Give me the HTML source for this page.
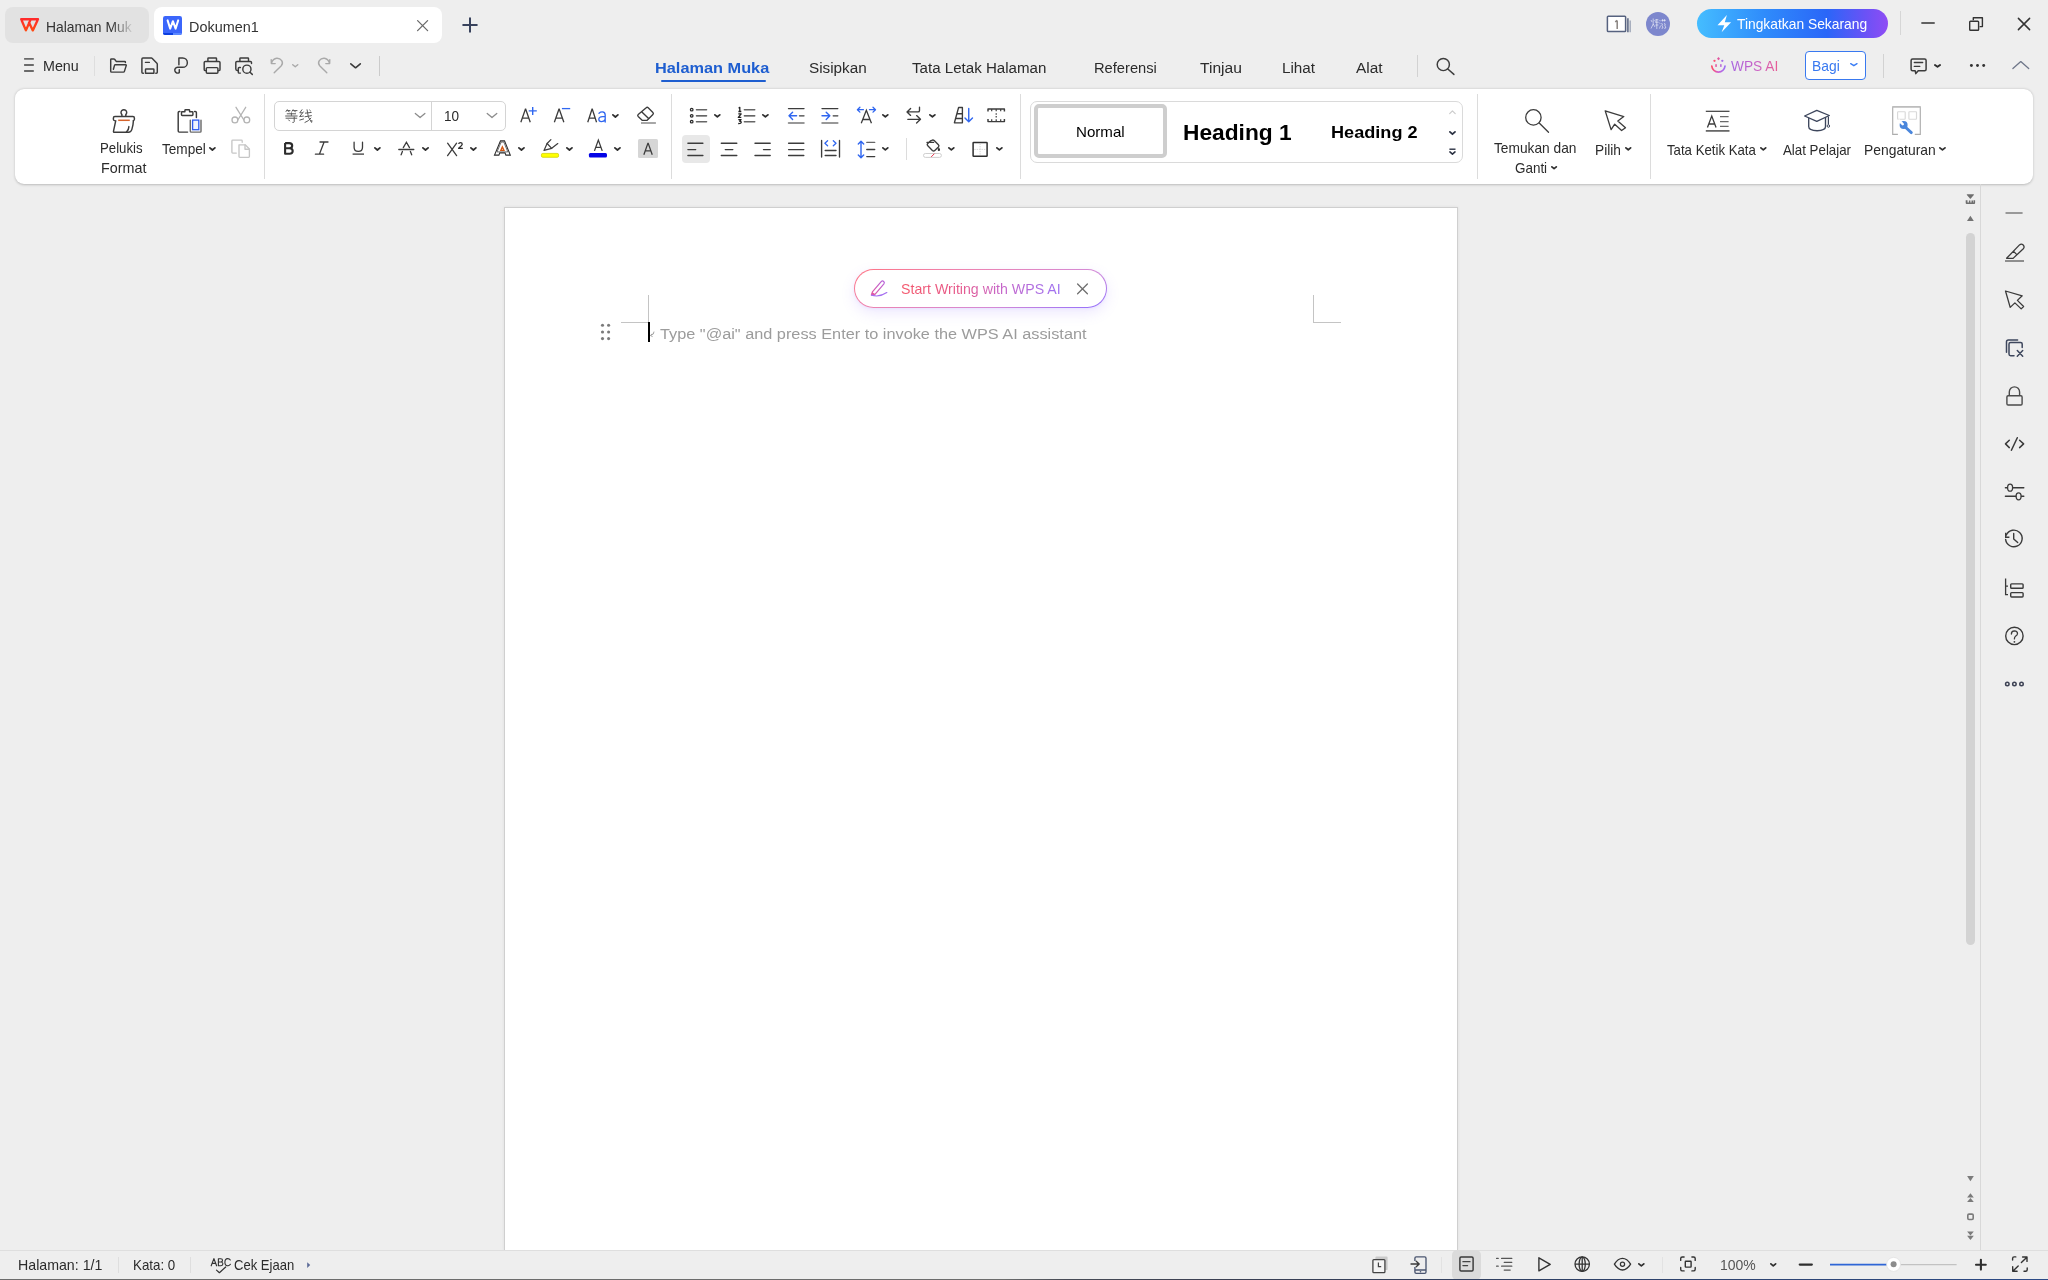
<!DOCTYPE html>
<html><head><meta charset="utf-8"><title>Dokumen1</title>
<style>
html,body{margin:0;padding:0;}
body{width:2048px;height:1280px;overflow:hidden;background:#eeeeee;position:relative;font-family:"Liberation Sans",sans-serif;}
.a{position:absolute;display:block;}
.t{position:absolute;white-space:nowrap;line-height:1;transform-origin:0 0;font-family:"Liberation Sans",sans-serif;}
</style></head><body>
<div class="a" style="left:5px;top:7px;width:144px;height:36px;background:#e2e2e2;border-radius:8px;"></div>
<div class="a" style="left:154px;top:7px;width:287.5px;height:36px;background:#ffffff;border-radius:8px;"></div>
<div class="t" style="left:46.27px;top:18.50px;font-size:15px;color:#333;transform:scaleX(0.9257);-webkit-mask-image:linear-gradient(90deg,#000 76%,transparent 103%);mask-image:linear-gradient(90deg,#000 76%,transparent 103%);">Halaman Muk</div>
<div class="t" style="left:189.44px;top:18.50px;font-size:15px;color:#333;transform:scaleX(0.9607);">Dokumen1</div>
<div class="a" style="left:1697px;top:9.3px;width:191px;height:29.1px;background:linear-gradient(90deg,#45bdff 0%,#2f8cfb 35%,#2a66f8 68%,#6a52f6 88%,#8f4cf4 100%);border-radius:14.5px;"></div>
<div class="t" style="left:1737.40px;top:17.43px;font-size:14.5px;color:#fff;transform:scaleX(0.9529);">Tingkatkan Sekarang</div>
<div class="a" style="left:1900px;top:11px;width:1px;height:24px;background:#d6d6d6;border-radius:0px;"></div>
<div class="a" style="left:1646px;top:12px;width:24.4px;height:24.4px;background:#7d87cd;border-radius:12.2px;"></div>
<div class="t" style="left:43.01px;top:59.03px;font-size:14.5px;color:#2b2b2b;transform:scaleX(0.9856);">Menu</div>
<div class="a" style="left:93.6px;top:56.3px;width:1px;height:19.4px;background:#dedede;border-radius:0px;"></div>
<div class="a" style="left:379px;top:56.3px;width:1px;height:19.4px;background:#cbcbcb;border-radius:0px;"></div>
<div class="t" style="left:655.33px;top:59.95px;font-size:15.3px;color:#1e5ed0;font-weight:700;transform:scaleX(1.0665);">Halaman Muka</div>
<div class="a" style="left:661px;top:79.6px;width:105.2px;height:2.8px;background:#1e5ed0;border-radius:1.4px;"></div>
<div class="t" style="left:808.80px;top:59.86px;font-size:15.4px;color:#2b2b2b;transform:scaleX(0.9928);">Sisipkan</div>
<div class="t" style="left:912.30px;top:59.86px;font-size:15.4px;color:#2b2b2b;transform:scaleX(0.9815);">Tata Letak Halaman</div>
<div class="t" style="left:1093.95px;top:59.86px;font-size:15.4px;color:#2b2b2b;transform:scaleX(0.9542);">Referensi</div>
<div class="t" style="left:1200.00px;top:59.86px;font-size:15.4px;color:#2b2b2b;transform:scaleX(1.0150);">Tinjau</div>
<div class="t" style="left:1282.01px;top:59.86px;font-size:15.4px;color:#2b2b2b;transform:scaleX(0.9910);">Lihat</div>
<div class="t" style="left:1356.30px;top:59.86px;font-size:15.4px;color:#2b2b2b;transform:scaleX(1.0020);">Alat</div>
<div class="a" style="left:1417.3px;top:54.7px;width:1px;height:22.4px;background:#d2d2d2;border-radius:0px;"></div>
<div class="t" style="left:1731.30px;top:58.40px;font-size:15px;color:#b05fd6;transform:scaleX(0.9155);background:linear-gradient(90deg,#a765e0 0%,#c95fc4 55%,#ea5c92 100%);-webkit-background-clip:text;background-clip:text;color:transparent;">WPS AI</div>
<div class="a" style="left:1805px;top:51px;width:59px;height:27px;border:1px solid #3979f0;border-radius:4px;background:#fff"></div>
<div class="t" style="left:1811.68px;top:58.40px;font-size:15px;color:#3979f0;transform:scaleX(0.9237);">Bagi</div>
<div class="a" style="left:1883.3px;top:53.6px;width:1px;height:24px;background:#d2d2d2;border-radius:0px;"></div>
<div class="a" style="left:15px;top:88.5px;width:2018px;height:95px;background:#fff;border-radius:9px;box-shadow:0 0.5px 2.5px rgba(0,0,0,.22)"></div>
<div class="a" style="left:264.3px;top:94px;width:1px;height:85px;background:#dcdcdc;border-radius:0px;"></div>
<div class="a" style="left:671.2px;top:94px;width:1px;height:85px;background:#dcdcdc;border-radius:0px;"></div>
<div class="a" style="left:1020.4px;top:94px;width:1px;height:85px;background:#dcdcdc;border-radius:0px;"></div>
<div class="a" style="left:1477px;top:94px;width:1px;height:85px;background:#dcdcdc;border-radius:0px;"></div>
<div class="a" style="left:1650px;top:94px;width:1px;height:85px;background:#dcdcdc;border-radius:0px;"></div>
<div class="t" style="left:100.29px;top:140.53px;font-size:14.5px;color:#2b2b2b;transform:scaleX(0.9100);">Pelukis</div>
<div class="t" style="left:101.11px;top:160.63px;font-size:14.5px;color:#2b2b2b;transform:scaleX(0.9890);">Format</div>
<div class="t" style="left:161.50px;top:141.63px;font-size:14.5px;color:#2b2b2b;transform:scaleX(0.9372);">Tempel</div>
<div class="a" style="left:274px;top:101px;width:229.6px;height:27.5px;border:1px solid #d4d4d4;border-radius:5px;background:#fff"></div>
<div class="a" style="left:431px;top:101.5px;width:1px;height:28px;background:#d4d4d4;border-radius:0px;"></div>
<div class="t" style="left:443.56px;top:109.23px;font-size:14.5px;color:#2b2b2b;transform:scaleX(0.9360);">10</div>
<div class="a" style="left:681.8px;top:134.5px;width:28.4px;height:28.2px;background:#e8e8e8;border-radius:4px;"></div>
<div class="a" style="left:638.3px;top:139px;width:19.5px;height:19.2px;background:#d6d6d6;border-radius:1.5px;"></div>
<div class="a" style="left:906.2px;top:137.7px;width:1px;height:22px;background:#dcdcdc;border-radius:0px;"></div>
<div class="a" style="left:1030px;top:101px;width:431px;height:60px;border:1px solid #dadada;border-radius:7px;background:#fff"></div>
<div class="a" style="left:1034px;top:104.1px;width:125px;height:46px;border:4.5px solid #cecece;border-radius:5px;background:#fff"></div>
<div class="t" style="left:1076.36px;top:124.93px;font-size:14.5px;color:#000;transform:scaleX(1.0416);">Normal</div>
<div class="t" style="left:1182.75px;top:122.12px;font-size:21.6px;color:#000;font-weight:700;transform:scaleX(1.0530);">Heading 1</div>
<div class="t" style="left:1331.13px;top:123.91px;font-size:17px;color:#000;font-weight:700;transform:scaleX(1.0654);">Heading 2</div>
<div class="t" style="left:1493.60px;top:141.03px;font-size:14.5px;color:#2b2b2b;transform:scaleX(0.9472);">Temukan dan</div>
<div class="t" style="left:1514.80px;top:160.63px;font-size:14.5px;color:#2b2b2b;transform:scaleX(0.9264);">Ganti</div>
<div class="t" style="left:1595.35px;top:142.63px;font-size:14.5px;color:#2b2b2b;transform:scaleX(0.9455);">Pilih</div>
<div class="t" style="left:1666.70px;top:142.63px;font-size:14.5px;color:#2b2b2b;transform:scaleX(0.9110);">Tata Ketik Kata</div>
<div class="t" style="left:1782.70px;top:142.63px;font-size:14.5px;color:#2b2b2b;transform:scaleX(0.9176);">Alat Pelajar</div>
<div class="t" style="left:1864.14px;top:142.63px;font-size:14.5px;color:#2b2b2b;transform:scaleX(0.9565);">Pengaturan</div>
<div class="a" style="left:504px;top:207px;width:952px;height:1043px;background:#fff;border:1px solid #cfcfcf;border-bottom:none;box-shadow:0 0 3px rgba(0,0,0,.07)"></div>
<div class="a" style="left:1980px;top:184px;width:1px;height:1066px;background:#d8d8d8;border-radius:0px;"></div>
<div class="a" style="left:1965.8px;top:232.6px;width:9.3px;height:712.6px;background:#d3d3d3;border-radius:4.65px;"></div>
<div class="a" style="left:0px;top:1249.9px;width:2048px;height:1px;background:#dedede;border-radius:0px;"></div>
<div class="a" style="left:0px;top:1250.5px;width:2048px;height:29.5px;background:#eeeeee;border-radius:0px;"></div>
<div class="t" style="left:18.48px;top:1258.63px;font-size:13.9px;color:#2b2b2b;transform:scaleX(1.0208);">Halaman: 1/1</div>
<div class="a" style="left:118px;top:1256.7px;width:1px;height:16.4px;background:#dedede;border-radius:0px;"></div>
<div class="t" style="left:133.34px;top:1258.63px;font-size:13.9px;color:#2b2b2b;transform:scaleX(0.9586);">Kata: 0</div>
<div class="a" style="left:190px;top:1256.7px;width:1px;height:16.4px;background:#dedede;border-radius:0px;"></div>
<div class="t" style="left:233.90px;top:1258.93px;font-size:13.9px;color:#2b2b2b;transform:scaleX(0.9390);">Cek Ejaan</div>
<div class="t" style="left:1719.89px;top:1258.53px;font-size:13.9px;color:#555;transform:scaleX(1.0066);">100%</div>
<svg class="a" style="left:18px;top:16px;" width="24" height="18" viewBox="0 0 24 18" fill="none"><defs><linearGradient id="wg" x1="0" y1="0" x2="0" y2="1"><stop offset="0" stop-color="#ff2b2b"/><stop offset="1" stop-color="#ff4a14"/></linearGradient></defs><path d="M3.2 3.2 H20 M3.2 3.3 L7.9 14.4 L12.7 3.4 M11 6.6 L14.8 14.4 L20 3.3" stroke="url(#wg)" stroke-width="2.35" stroke-linejoin="round" stroke-linecap="round"/></svg>
<div class="a" style="left:163px;top:15.8px;width:19.2px;height:19.4px;background:#3b66fb;border-radius:2.2px;"></div>
<div class="a" style="left:163px;top:32.9px;width:19.2px;height:2.3px;border-radius:0 0 2.2px 2.2px;background:linear-gradient(90deg,#0c3fe0 0 52%,#5a88ff 52%)"></div>
<svg class="a" style="left:166px;top:19px;" width="14" height="12" viewBox="0 0 14 12" fill="none"><path d="M1.6 1.4 L4.2 9.6 L6.9 2.2 L9.6 9.6 L12.2 1.4" stroke="#fff" stroke-width="2" stroke-linejoin="round" stroke-linecap="round"/></svg>
<svg class="a" style="left:415px;top:18px;" width="15" height="15" viewBox="0 0 15 15" fill="none"><path d="M2.6 2.6 L12.6 12.6 M12.6 2.6 L2.6 12.6" stroke="#6a6a6a" stroke-width="1.3" stroke-linecap="round"/></svg>
<svg class="a" style="left:461px;top:16px;" width="18" height="18" viewBox="0 0 18 18" fill="none"><path d="M9 2.2 V15.8 M2.2 9 H15.8" stroke="#38425c" stroke-width="2" stroke-linecap="round"/></svg>
<svg class="a" style="left:1605px;top:14px;" width="28" height="20" viewBox="0 0 28 20" fill="none"><rect x="2.4" y="2.3" width="18.2" height="15.3" rx="0.8" fill="#fff" stroke="#56627f" stroke-width="1.5"/><path d="M12.2 6.4 V14.9 M12.2 6.4 L10.2 7.9" stroke="#8a8480" stroke-width="1.5" stroke-linecap="butt"/><path d="M22.9 4.2 V18.2" stroke="#56627f" stroke-width="1.5"/><path d="M25.2 6.6 V18.2" stroke="#a4abbb" stroke-width="1.5"/></svg>
<svg class="a" style="left:1650px;top:17px;" width="17" height="14" viewBox="0 0 17 14" fill="none"><g stroke="#fff" stroke-opacity=".62" stroke-width="0.9" fill="none"><path d="M1 3 L2 5 M3.2 1.5 V7 L1 11.5 M3.2 7 L5 10 M4.6 3 L5.4 4.6 M5 5.2 H8.6 M5.4 8 H8.4 M6.8 2 V12 M5.2 2.8 H8.4"/><path d="M9.6 3 L10.4 4.2 M9.4 5.6 L10.2 6.8 M9.4 11.6 L10.6 8.6 M11.4 3.4 H15.8 M12.6 2 V4.6 M14.6 2 V4.6 M11.6 6 L12.6 8.2 L11.4 8.4 M12.4 9 L13 11 L11.6 11.4 M14.4 6 L15.4 8.2 L14.2 8.4 M15.2 9 L15.8 11 L14.2 11.4"/></g></svg>
<svg class="a" style="left:1716px;top:14px;" width="17" height="20" viewBox="0 0 17 20" fill="none"><path d="M10.9 1 L1.5 11.2 H8.3 L5.6 18.3 L15.1 8.3 H8.8 Z" fill="#fff"/></svg>
<svg class="a" style="left:1920px;top:20px;" width="17" height="6" viewBox="0 0 17 6" fill="none"><path d="M1.9 3.1 H14.2" stroke="#333" stroke-width="1.5" stroke-linecap="round"/></svg>
<svg class="a" style="left:1967px;top:15px;" width="18" height="18" viewBox="0 0 18 18" fill="none"><path d="M6.3 5.2 V2.8 H15.4 V11.6 H12.6" stroke="#333" stroke-width="1.4" stroke-linejoin="round"/><rect x="2.7" y="6.3" width="8.9" height="8.9" rx="0.8" stroke="#333" stroke-width="1.4"/></svg>
<svg class="a" style="left:2016px;top:16px;" width="16" height="16" viewBox="0 0 16 16" fill="none"><path d="M2.4 2.4 L13.6 13.6 M13.6 2.4 L2.4 13.6" stroke="#333" stroke-width="1.5" stroke-linecap="round"/></svg>
<svg class="a" style="left:22px;top:56px;" width="14" height="18" viewBox="0 0 14 18" fill="none"><path d="M2.1 2.9 H11.8 M2.1 9 H11.8 M2.1 15 H11.8" stroke="#6a6a6a" stroke-width="1.8"/></svg>
<svg class="a" style="left:108px;top:56px;" width="21" height="19" viewBox="0 0 21 19" fill="none"><path d="M17.4 6.4 V6 Q17.4 5.4 16.8 5.4 H8.2 L6.6 3.2 Q6.4 3 6 3 H3.4 Q2.7 3 2.7 3.7 V15.2 Q2.7 16.1 3.6 16.1 H15.4 Q16.2 16.1 16.4 15.4 L18.3 9.4 Q18.5 8.7 17.7 8.7 H7.4 Q6.7 8.7 6.5 9.4 L5.4 13.2" stroke="#3c3c3c" stroke-width="1.45" stroke-linejoin="round" stroke-linecap="round"/></svg>
<svg class="a" style="left:139px;top:55px;" width="21" height="21" viewBox="0 0 21 21" fill="none"><path d="M4.4 18.2 H3.9 Q2.9 18.2 2.9 17.2 V4 Q2.9 3 3.9 3 H12.4 Q12.9 3 13.3 3.4 L17.9 8.2 Q18.3 8.6 18.3 9.1 V17.2 Q18.3 18.2 17.3 18.2 H16.8" stroke="#3c3c3c" stroke-width="1.45" stroke-linecap="round"/><path d="M6.5 18.3 V14.6 Q6.5 14 7.1 14 H14.3 Q14.9 14 14.9 14.6 V18.3 Z" stroke="#3c3c3c" stroke-width="1.45" stroke-linejoin="round"/><path d="M6.4 7.4 H10.4" stroke="#3c3c3c" stroke-width="1.3" stroke-linecap="round"/></svg>
<svg class="a" style="left:171px;top:55px;" width="20" height="21" viewBox="0 0 20 21" fill="none"><path d="M7.9 9.8 V3 H11.7 A4.65 4.65 0 0 1 11.7 12.3 H6.6 A2.9 2.9 0 1 0 8.3 17.6 V14.6" stroke="#3c3c3c" stroke-width="1.45" stroke-linecap="round" stroke-linejoin="round"/></svg>
<svg class="a" style="left:201px;top:55px;" width="22" height="21" viewBox="0 0 22 21" fill="none"><path d="M6.9 6.3 V3.6 Q6.9 2.9 7.6 2.9 H14.8 Q15.5 2.9 15.5 3.6 V6.3" stroke="#3c3c3c" stroke-width="1.45"/><path d="M5.2 15.6 H4.4 Q3.2 15.6 3.2 14.4 V7.6 Q3.2 6.4 4.4 6.4 H17.8 Q19 6.4 19 7.6 V14.4 Q19 15.6 17.8 15.6 H17" stroke="#3c3c3c" stroke-width="1.45"/><rect x="5.3" y="12.6" width="11.6" height="5.6" rx="1" stroke="#3c3c3c" stroke-width="1.45"/></svg>
<svg class="a" style="left:233px;top:55px;" width="22" height="22" viewBox="0 0 22 22" fill="none"><path d="M6.9 6.3 V3.6 Q6.9 2.9 7.6 2.9 H14.8 Q15.5 2.9 15.5 3.6 V6.3" stroke="#3c3c3c" stroke-width="1.45"/><path d="M4.6 15.4 H4.2 Q2.8 15.4 2.8 14 V7.6 Q2.8 6.4 4 6.4 H17.4 Q18.5 6.4 18.5 7.5 V8.4" stroke="#3c3c3c" stroke-width="1.45" stroke-linecap="round"/><path d="M7.4 12.5 H6.2 Q5.3 12.5 5.3 13.4 V17.2 Q5.3 18.1 6.2 18.1 H7.4" stroke="#3c3c3c" stroke-width="1.45" stroke-linecap="round"/><circle cx="13.9" cy="14.2" r="4.1" stroke="#3c3c3c" stroke-width="1.45"/><path d="M17 17.3 L19.3 19.4" stroke="#3c3c3c" stroke-width="1.45" stroke-linecap="round"/></svg>
<svg class="a" style="left:268px;top:56px;" width="17" height="19" viewBox="0 0 17 19" fill="none"><path d="M6.2 16.8 L13.3 9.7 Q15.4 7.4 13.7 4.6 Q11.9 2.1 8.7 2.3 Q5 2.7 3.5 6.9" stroke="#a9a9a9" stroke-width="1.4" stroke-linecap="round"/><path d="M3.2 3.6 L3.4 7.5 L7.2 7.6" stroke="#a9a9a9" stroke-width="1.4" stroke-linecap="round" stroke-linejoin="round"/></svg>
<svg class="a" style="left:290.4px;top:62.099999999999994px;" width="10.5" height="7.5" viewBox="0 0 10.5 7.5" fill="none"><path d="M2.75 2.75 L5.25 4.75 L7.75 2.75" stroke="#a9a9a9" stroke-width="1.5" stroke-linecap="round" stroke-linejoin="round"/></svg>
<svg class="a" style="left:316px;top:56px;" width="17" height="19" viewBox="0 0 17 19" fill="none"><g transform="translate(17,0) scale(-1,1)"><path d="M6.2 16.8 L13.3 9.7 Q15.4 7.4 13.7 4.6 Q11.9 2.1 8.7 2.3 Q5 2.7 3.5 6.9" stroke="#a9a9a9" stroke-width="1.4" stroke-linecap="round"/><path d="M3.2 3.6 L3.4 7.5 L7.2 7.6" stroke="#a9a9a9" stroke-width="1.4" stroke-linecap="round" stroke-linejoin="round"/></g></svg>
<svg class="a" style="left:347.7px;top:61.3px;" width="15.100000000000023" height="9.600000000000009" viewBox="0 0 15.100000000000023 9.600000000000009" fill="none"><path d="M2.80 2.80 L7.55 6.80 L12.30 2.80" stroke="#3a3a3a" stroke-width="1.6" stroke-linecap="round" stroke-linejoin="round"/></svg>
<svg class="a" style="left:1434px;top:55px;" width="23" height="22" viewBox="0 0 23 22" fill="none"><circle cx="9.3" cy="9.5" r="6.1" stroke="#3c3c3c" stroke-width="1.45"/><path d="M13.8 14 L19.9 19.4" stroke="#3c3c3c" stroke-width="1.45" stroke-linecap="round"/></svg>
<svg class="a" style="left:1709px;top:56px;" width="19" height="19" viewBox="0 0 19 19" fill="none"><defs><linearGradient id="ai" x1="0" y1="0" x2="1" y2="0"><stop offset="0" stop-color="#ff4f66"/><stop offset=".5" stop-color="#cf5fd2"/><stop offset="1" stop-color="#9a72f4"/></linearGradient></defs><path d="M2.8 10.2 A6.65 6.65 0 0 0 16 10.2" stroke="url(#ai)" stroke-width="1.7" stroke-linecap="round"/><rect x="6.3" y="8.2" width="1.5" height="2.7" fill="#e0559f"/><rect x="11.1" y="8.2" width="1.5" height="2.7" fill="#b768d8"/><circle cx="5.5" cy="4.8" r="1.15" fill="#fb5272"/><path d="M9.5 1.1 L11 2.7 L9.5 4.3 L8 2.7 Z" fill="#e2569e"/><circle cx="13.3" cy="4.8" r="1.15" fill="#a66ee8"/></svg>
<svg class="a" style="left:1848px;top:61.4px;" width="11.700000000000045" height="7.399999999999999" viewBox="0 0 11.700000000000045 7.399999999999999" fill="none"><path d="M2.70 2.70 L5.85 4.70 L9.00 2.70" stroke="#3a7df5" stroke-width="1.4" stroke-linecap="round" stroke-linejoin="round"/></svg>
<svg class="a" style="left:1908px;top:56px;" width="21" height="20" viewBox="0 0 21 20" fill="none"><path d="M4.6 3 H16.6 Q18.1 3 18.1 4.5 V13.3 Q18.1 14.8 16.6 14.8 H10.2 L7.8 17.6 L7.2 14.8 H4.6 Q3.1 14.8 3.1 13.3 V4.5 Q3.1 3 4.6 3 Z" stroke="#3c3c3c" stroke-width="1.5" stroke-linejoin="round"/><path d="M6.3 6.5 H14.7 M6.3 10.4 H11.8" stroke="#3c3c3c" stroke-width="1.3" stroke-linecap="round"/></svg>
<svg class="a" style="left:1931.9px;top:62px;" width="11.0" height="7.799999999999997" viewBox="0 0 11.0 7.799999999999997" fill="none"><path d="M2.95 2.95 L5.50 4.85 L8.05 2.95" stroke="#2e2e2e" stroke-width="1.9" stroke-linecap="round" stroke-linejoin="round"/></svg>
<svg class="a" style="left:1968px;top:62px;" width="19" height="7" viewBox="0 0 19 7" fill="none"><circle cx="3.4" cy="3.5" r="1.45" fill="#333"/><circle cx="9.5" cy="3.5" r="1.45" fill="#333"/><circle cx="15.7" cy="3.5" r="1.45" fill="#333"/></svg>
<svg class="a" style="left:2010px;top:59px;" width="21" height="12" viewBox="0 0 21 12" fill="none"><path d="M2.9 9.6 L10.8 2.6 L18.7 9.6" stroke="#6e7689" stroke-width="1.3" stroke-linecap="round" stroke-linejoin="round"/></svg>
<svg class="a" style="left:0px;top:88px;" width="2048" height="96" viewBox="0 88 2048 96" fill="none"><g stroke="#3c3c3c" stroke-width="1.45" stroke-linecap="round" stroke-linejoin="round"><path d="M121.9 116.3 V114.6 A2.85 2.85 0 1 1 125.8 114.6 V116.3"/><path d="M114.4 120.6 Q113.4 120.4 113.4 119.3 V117.9 Q113.4 116.4 114.9 116.4 H132.9 Q134.4 116.4 134.4 117.9 V119.3 Q134.4 120.4 133.4 120.6"/><path d="M115.7 120.8 L113.5 131.2 Q113.3 132.2 114.3 132.2 H128.6 Q131 132.2 131.8 129.6 Q133.3 125 133.4 120.8"/><path d="M128.9 126.6 Q128.7 130.4 126.4 132.1"/></g><path d="M118.2 120.3 H129.8" stroke="#d5632b" stroke-width="1.5"/><g stroke="#3c3c3c" stroke-width="1.45" stroke-linecap="round" stroke-linejoin="round"><path d="M187.6 132.1 H179.3 Q178.2 132.1 178.2 131 V112.6 Q178.2 111.5 179.3 111.5 H179.9"/><path d="M194.6 111.5 H195.3 Q196.4 111.5 196.4 112.6 V117.4"/><path d="M184.9 111.7 V110.4 Q184.9 109.7 185.6 109.7 H188.9 Q189.6 109.7 189.6 110.4 V111.7 H192.2 Q192.9 111.7 192.9 112.4 V114.7 Q192.9 115.4 192.2 115.4 H182.2 Q181.5 115.4 181.5 114.7 V112.4 Q181.5 111.7 182.2 111.7 Z"/></g><path d="M190.3 120.2 V131.2 Q190.3 132.1 191.2 132.1 H200.1 Q201 132.1 201 131.2 V120.2" stroke="#6c6c6c" stroke-width="1.45" stroke-linecap="round"/><rect x="192.6" y="120.1" width="6.2" height="9.6" stroke="#2c59ef" stroke-width="1.3" fill="#eef2ff"/><g stroke="#b4b4b4" stroke-width="1.3" stroke-linecap="round"><circle cx="234.9" cy="119.9" r="2.9"/><circle cx="246.8" cy="119.9" r="2.9"/><path d="M236 107.3 L243.9 120 M245.7 107.3 L237.8 120"/></g><g stroke="#c6c6c6" stroke-width="1.35" stroke-linejoin="round" stroke-linecap="round"><path d="M236.3 153.1 H232.7 Q231.9 153.1 231.9 152.3 V140.9 Q231.9 140.1 232.7 140.1 H241.4 Q242.2 140.1 242.2 140.9 V142.2"/><path d="M239 144.8 H245.2 L249.4 149 V156.6 Q249.4 157.4 248.6 157.4 H239.8 Q239 157.4 239 156.6 Z"/><path d="M245 145 V149.2 H249.2"/></g><g stroke="#5a5a5a" stroke-width="1" stroke-linecap="butt" fill="none" transform="translate(284.8,109.2)"><path d="M2.6 0.2 L1 2.6 M2 1.4 H5.6 M3.6 1.6 L4.4 3 M8.4 0.2 L7 2.4 M7.8 1.4 H12.6 M9.8 1.6 L10.6 3"/><path d="M2 4.6 H11.2 M6.6 3.2 V6.6 M0.4 6.8 H12.8 M0.8 9 H12.4 M9.4 7.4 V12.6 Q9.4 13.4 7.6 13.2 M3.6 10.4 L5 12"/><g transform="translate(14.2,0)"><path d="M3.2 0.2 L0.8 3.6 H3.8 M4.6 2.4 L0.6 7.4 L4.8 6.8 M0.4 11 L5 9.6"/><path d="M6 4 L12.6 3.2 M5.6 7.6 L12.8 6.4 M8 0.2 Q8.4 8.6 12.6 13.4 M12.2 8.6 Q9.6 12 5.6 13.4 M10.4 0.6 L11.8 2 M12.8 10.8 V13"/></g></g><path d="M415.3 113.5 L420.1 117.6 L424.9 113.5 M487.2 113.5 L492 117.6 L496.8 113.5" stroke="#8c8c8c" stroke-width="1.25" stroke-linecap="round" stroke-linejoin="round"/><path d="M520.85 122.20 L525.55 108.75 L530.25 122.20 M522.06 118.10 H529.04" stroke="#3c3c3c" stroke-width="1.3" stroke-linejoin="miter" stroke-miterlimit="3" fill="none"/><path d="M532.7 106.9 V114.9 M528.7 110.9 H536.8" stroke="#2f66f0" stroke-width="1.4"/><path d="M554.35 122.20 L559.10 108.75 L563.85 122.20 M555.57 118.10 H562.63" stroke="#3c3c3c" stroke-width="1.3" stroke-linejoin="miter" stroke-miterlimit="3" fill="none"/><path d="M561.9 108.6 H570.2" stroke="#2f66f0" stroke-width="1.3"/><path d="M587.75 122.20 L592.15 108.75 L596.55 122.20 M588.87 118.10 H595.43" stroke="#3c3c3c" stroke-width="1.3" stroke-linejoin="miter" stroke-miterlimit="3" fill="none"/><path d="M599 113.2 Q600.6 111.8 602.4 111.9 Q605.2 112.1 605.2 115 V122 M605.2 116.6 H602.6 Q598.8 116.7 598.8 119.3 Q598.8 121.6 601.4 121.6 Q604 121.6 605.2 119.4" stroke="#2f66f0" stroke-width="1.3" stroke-linecap="round" fill="none"/><g stroke="#3c3c3c" stroke-width="1.35" stroke-linejoin="round" stroke-linecap="round"><path d="M646.2 107.7 Q647.2 106.7 648.2 107.7 L652.9 112.4 Q653.9 113.4 652.9 114.4 L646.9 120.4 H642.4 L638.2 116.6 Q637.2 115.6 638.2 114.6 Z"/><path d="M641.9 111.9 L648.6 118.6"/></g><path d="M641 123 H655.9" stroke="#8a8a8a" stroke-width="1.5"/><path d="M285.1 143.1 H289.2 Q292.2 143.1 292.2 145.8 Q292.2 148.3 289.4 148.3 H285.1 M289.4 148.3 Q292.7 148.4 292.7 151.1 Q292.7 153.7 289.6 153.7 H285.1 V143.1" stroke="#2c2c2c" stroke-width="2.1" stroke-linejoin="round" fill="none"/><path d="M320 142 H328 M315.4 154.2 H323.6 M324.1 142 L319.4 154.2" stroke="#3c3c3c" stroke-width="1.3" stroke-linecap="round"/><path d="M354.1 142.2 V147.2 Q354.1 151.4 358.3 151.4 Q362.5 151.4 362.5 147.2 V142.2" stroke="#3c3c3c" stroke-width="1.3" stroke-linecap="round" fill="none"/><path d="M352.6 154.1 H364" stroke="#3c3c3c" stroke-width="1.3"/><path d="M403.3 147.6 L406.4 142.2 L409.5 147.6 M402.4 151.4 L401.1 154.8 M410.4 151.4 L411.7 154.8" stroke="#3c3c3c" stroke-width="1.3" stroke-linecap="round" stroke-linejoin="miter" fill="none"/><path d="M398.8 149.5 H413.8" stroke="#3c3c3c" stroke-width="1.3" stroke-linecap="round"/><path d="M447.6 143.2 L456.6 155.6 M456.6 143.2 L447.6 155.6" stroke="#3c3c3c" stroke-width="1.3" stroke-linecap="round"/><path d="M458.7 144 Q458.9 142.7 460.5 142.7 Q462.2 142.7 462.2 144.2 Q462.2 145.2 458.6 148.3 H462.8" stroke="#2e2e2e" stroke-width="1.3" stroke-linejoin="round" fill="none"/><path d="M494.5 155.1 L500.5 140.9 H504.5 L510.3 155.1 H505.9 L505 152.9 H499.8 L498.9 155.1 Z" stroke="#2c2c2c" stroke-width="1.1" stroke-linejoin="miter" fill="#fff"/><path d="M501.2 142 H503.8 L507.8 151.9 H497 Z" stroke="#4a4a4a" stroke-width="0.8" stroke-linejoin="miter" fill="#fff"/><path d="M502.35 145.3 L505 151 H499.8 Z" fill="#d4560f"/><circle cx="502.4" cy="149.3" r="0.55" fill="#ffe3d2"/><g stroke="#3c3c3c" stroke-width="1.2" stroke-linecap="round" stroke-linejoin="round" fill="none"><path d="M550.9 139.6 L547.1 143.5 L544 150.4 L551.7 148.3 L557.8 143.6"/><path d="M547.1 143.5 L551.7 148.3"/></g><rect x="541.4" y="153.4" width="17.2" height="3.9" rx="1.4" fill="#ffff00" stroke="#d2d200" stroke-width="0.8"/><path d="M594.45 150.90 L598.35 140.05 L602.25 150.90 M595.48 147.40 H601.22" stroke="#3c3c3c" stroke-width="1.3" stroke-linejoin="miter" stroke-miterlimit="3" fill="none"/><rect x="588.9" y="153" width="18.1" height="4.6" rx="1.5" fill="#0404e6"/><path d="M643.85 154.80 L648.05 142.85 L652.25 154.80 M645.04 150.80 H651.06" stroke="#3c3c3c" stroke-width="1.3" stroke-linejoin="miter" stroke-miterlimit="3" fill="none"/></svg>
<svg class="a" style="left:207px;top:144.5px;" width="10.800000000000011" height="7.900000000000006" viewBox="0 0 10.800000000000011 7.900000000000006" fill="none"><path d="M2.90 2.90 L5.40 5.00 L7.90 2.90" stroke="#2e2e2e" stroke-width="1.8" stroke-linecap="round" stroke-linejoin="round"/></svg>
<svg class="a" style="left:610.3px;top:111.7px;" width="10.800000000000068" height="7.8999999999999915" viewBox="0 0 10.800000000000068 7.8999999999999915" fill="none"><path d="M2.90 2.90 L5.40 5.00 L7.90 2.90" stroke="#2e2e2e" stroke-width="1.8" stroke-linecap="round" stroke-linejoin="round"/></svg>
<svg class="a" style="left:371.8px;top:145px;" width="10.800000000000011" height="7.900000000000006" viewBox="0 0 10.800000000000011 7.900000000000006" fill="none"><path d="M2.90 2.90 L5.40 5.00 L7.90 2.90" stroke="#2e2e2e" stroke-width="1.8" stroke-linecap="round" stroke-linejoin="round"/></svg>
<svg class="a" style="left:419.6px;top:145px;" width="11.0" height="7.900000000000006" viewBox="0 0 11.0 7.900000000000006" fill="none"><path d="M2.90 2.90 L5.50 5.00 L8.10 2.90" stroke="#2e2e2e" stroke-width="1.8" stroke-linecap="round" stroke-linejoin="round"/></svg>
<svg class="a" style="left:467.8px;top:145px;" width="10.800000000000011" height="7.900000000000006" viewBox="0 0 10.800000000000011 7.900000000000006" fill="none"><path d="M2.90 2.90 L5.40 5.00 L7.90 2.90" stroke="#2e2e2e" stroke-width="1.8" stroke-linecap="round" stroke-linejoin="round"/></svg>
<svg class="a" style="left:515.8px;top:145.2px;" width="10.900000000000091" height="7.900000000000006" viewBox="0 0 10.900000000000091 7.900000000000006" fill="none"><path d="M2.90 2.90 L5.45 5.00 L8.00 2.90" stroke="#2e2e2e" stroke-width="1.8" stroke-linecap="round" stroke-linejoin="round"/></svg>
<svg class="a" style="left:563.8px;top:145.2px;" width="10.900000000000091" height="7.900000000000006" viewBox="0 0 10.900000000000091 7.900000000000006" fill="none"><path d="M2.90 2.90 L5.45 5.00 L8.00 2.90" stroke="#2e2e2e" stroke-width="1.8" stroke-linecap="round" stroke-linejoin="round"/></svg>
<svg class="a" style="left:611.8px;top:145.2px;" width="10.900000000000091" height="7.900000000000006" viewBox="0 0 10.900000000000091 7.900000000000006" fill="none"><path d="M2.90 2.90 L5.45 5.00 L8.00 2.90" stroke="#2e2e2e" stroke-width="1.8" stroke-linecap="round" stroke-linejoin="round"/></svg>
<svg class="a" style="left:0px;top:88px;" width="2048" height="96" viewBox="0 88 2048 96" fill="none"><circle cx="691.7" cy="109.7" r="1.3" stroke="#2a2a2a" stroke-width="1.25" fill="none"/><path d="M696.4 109.7 H706.6" stroke="#666" stroke-width="1.35" stroke-linecap="round"/><circle cx="691.7" cy="115.8" r="1.3" stroke="#2a2a2a" stroke-width="1.25" fill="none"/><path d="M696.4 115.8 H706.6" stroke="#333" stroke-width="1.35" stroke-linecap="round"/><circle cx="691.7" cy="121.7" r="1.3" stroke="#2a2a2a" stroke-width="1.25" fill="none"/><path d="M696.4 121.7 H706.6" stroke="#666" stroke-width="1.35" stroke-linecap="round"/><path d="M744.3 109.7 H754.8" stroke="#666" stroke-width="1.35" stroke-linecap="round"/><path d="M744.3 115.8 H754.8" stroke="#333" stroke-width="1.35" stroke-linecap="round"/><path d="M744.3 121.7 H754.8" stroke="#666" stroke-width="1.35" stroke-linecap="round"/><g stroke="#222" stroke-width="1.3" fill="none" stroke-linejoin="round"><path d="M738.6 108.2 L739.8 107.4 V111.3 M738.4 111.5 H741.3"/><path d="M738.3 113.9 H741.2 L738.3 117.4 H741.3"/><path d="M738.3 119.6 H741.1 L739.6 121.2 Q741.3 121.3 741.2 122.6 Q741 123.7 738.2 123.5"/></g><path d="M788.5 108.6 H804" stroke="#3c3c3c" stroke-width="1.35" stroke-linecap="round"/><path d="M788.5 123 H804" stroke="#777" stroke-width="1.5" stroke-linecap="round"/><path d="M799.5 115.8 H804" stroke="#3c3c3c" stroke-width="1.35" stroke-linecap="round"/><path d="M796.6 115.8 H789.2 M792.6 112.2 L789 115.8 L792.6 119.4" stroke="#2f66f0" stroke-width="1.4" stroke-linecap="round" stroke-linejoin="round" fill="none"/><path d="M822 108.6 H837.8" stroke="#3c3c3c" stroke-width="1.35" stroke-linecap="round"/><path d="M822 123 H837.8" stroke="#777" stroke-width="1.5" stroke-linecap="round"/><path d="M833.2 115.8 H837.8" stroke="#3c3c3c" stroke-width="1.35" stroke-linecap="round"/><path d="M822 115.8 H829.6 M826.2 112.2 L829.8 115.8 L826.2 119.4" stroke="#2f66f0" stroke-width="1.4" stroke-linecap="round" stroke-linejoin="round" fill="none"/><path d="M861.25 123.30 L866.35 110.25 L871.45 123.30 M862.49 119.50 H870.21" stroke="#3c3c3c" stroke-width="1.3" stroke-linejoin="miter" stroke-miterlimit="3" fill="none"/><path d="M857.6 109.7 H863.4 M859.9 107.3 L857.4 109.7 L859.9 112.1 M869.5 109.7 H875.3 M873 107.3 L875.5 109.7 L873 112.1" stroke="#2f66f0" stroke-width="1.3" stroke-linecap="round" stroke-linejoin="round" fill="none"/><path d="M919.5 107.2 V110.4 Q919.5 111.9 918 111.9 H907.3 M910.6 108.4 L907 111.9 L910.6 115.4 M907.8 119.3 H920.2 M916.6 115.6 L920.5 119.3 L916.6 123" stroke="#3c3c3c" stroke-width="1.35" stroke-linecap="round" stroke-linejoin="round" fill="none"/><path d="M958.6 107.5 H962.4 V122.8 H954.4 Z M957 113.7 H962.4 M955.7 118.5 H962.4" stroke="#3c3c3c" stroke-width="1.35" stroke-linejoin="round" fill="none"/><path d="M968.75 108.4 V121.6 M965 118 L968.75 121.8 L972.5 118" stroke="#2f66f0" stroke-width="1.4" stroke-linecap="round" stroke-linejoin="round" fill="none"/><path d="M988 111.6 V108.9 H1004.4 V111.6 M988 118.9 V121.6 H1004.4 V118.9" stroke="#3c3c3c" stroke-width="1.45" stroke-linejoin="round" fill="none"/><path d="M991.7 109 V111.3 M996.2 109 V111.3 M1000.7 109 V111.3 M991.7 121.4 V119.2 M996.2 121.4 V119.2 M1000.7 121.4 V119.2 M996.2 113.3 V114.8 M996.2 115.9 V117.4" stroke="#3c3c3c" stroke-width="1.2"/><path d="M687.90 143.30 H702.90 M687.90 149.60 H695.70 M687.90 155.50 H702.90" stroke="#3c3c3c" stroke-width="1.4" stroke-linecap="round"/><path d="M721.30 143.30 H736.80 M725.30 149.60 H732.80 M721.30 155.50 H736.80" stroke="#3c3c3c" stroke-width="1.4" stroke-linecap="round"/><path d="M755.00 143.30 H770.20 M763.50 149.60 H770.20 M755.00 155.50 H770.20" stroke="#3c3c3c" stroke-width="1.4" stroke-linecap="round"/><path d="M788.60 143.30 H803.80 M788.60 149.60 H803.80 M788.60 155.50 H803.80" stroke="#3c3c3c" stroke-width="1.4" stroke-linecap="round"/><path d="M821.6 140.5 V157 M839.5 140.5 V157" stroke="#3c3c3c" stroke-width="1.35" stroke-linecap="round"/><path d="M825.2 150.5 H836 M825.2 155.5 H836" stroke="#3c3c3c" stroke-width="1.4" stroke-linecap="round"/><path d="M827.6 140.8 L824.9 143.3 L827.6 145.8 M833.3 140.8 L836 143.3 L833.3 145.8" stroke="#2f66f0" stroke-width="1.3" stroke-linecap="round" stroke-linejoin="round" fill="none"/><path d="M861 141.6 V157.4 M858.3 144.1 L861 141.3 L863.7 144.1 M858.3 154.9 L861 157.7 L863.7 154.9" stroke="#2f66f0" stroke-width="1.4" stroke-linecap="round" stroke-linejoin="round" fill="none"/><path d="M866.8 142.4 H874.7" stroke="#666" stroke-width="1.35" stroke-linecap="round"/><path d="M866.8 149.5 H874.7 M866.8 156.6 H874.7" stroke="#3c3c3c" stroke-width="1.4" stroke-linecap="round"/><path d="M927 142.4 H933.6 M931.6 140.6 Q932.9 139.3 934.2 140.6 L938.4 144.8 Q939.5 145.9 938.4 147 L934.8 150.4 Q933.6 151.5 932.4 150.4 L927.8 145.8 Q926.6 144.6 927.8 143.4 L930.6 140.8" stroke="#3c3c3c" stroke-width="1.35" stroke-linecap="round" stroke-linejoin="round" fill="none"/><path d="M938.9 147.3 Q940.2 149.2 940.1 150 Q940 151 938.9 151 Q937.8 151 937.7 150 Q937.6 149.2 938.9 147.3 Z" fill="#2e2e2e"/><rect x="923.5" y="153.5" width="17.9" height="3.9" rx="1.9" fill="#fff" stroke="#c9c9c9" stroke-width="0.9"/><path d="M931.2 156.9 L934.4 153.7" stroke="#e8344c" stroke-width="1"/><rect x="973.1" y="142.4" width="14" height="13.9" rx="0.6" stroke="#2e2e2e" stroke-width="1.5" fill="none"/><path d="M980.1 143.6 V155.2 M974.3 149.4 H985.9" stroke="#cfcfcf" stroke-width="0.9" stroke-dasharray="1.4 1"/><path d="M1449.7 113.6 L1452.45 110.9 L1455.2 113.6" stroke="#cdcdcd" stroke-width="1.3" stroke-linecap="round" stroke-linejoin="round" fill="none"/><path d="M1449.9 131.9 L1452.45 134.2 L1455 131.9" stroke="#2b3142" stroke-width="1.8" stroke-linecap="round" stroke-linejoin="round" fill="none"/><path d="M1449.4 149.2 H1455.5" stroke="#2b3142" stroke-width="1.4"/><path d="M1449.9 151.9 L1452.45 154.1 L1455 151.9" stroke="#2b3142" stroke-width="1.6" stroke-linecap="round" stroke-linejoin="round" fill="none"/><circle cx="1533.4" cy="117.4" r="7.7" stroke="#3c3c3c" stroke-width="1.3" fill="none"/><path d="M1539.2 123 L1548.5 132.3" stroke="#3c3c3c" stroke-width="1.3" stroke-linecap="round"/><path d="M1605.2 110.8 L1623.8 116.6 L1617.8 121 L1625.5 127.7 L1621.6 130.6 L1614.7 124.2 L1611.1 129.6 Z" stroke="#3c3c3c" stroke-width="1.3" stroke-linejoin="round" fill="none"/><path d="M1705.8 111.3 H1729.5" stroke="#3c3c3c" stroke-width="1.2"/><path d="M1705.8 130.9 H1729.5" stroke="#606060" stroke-width="1.7"/><path d="M1707.45 127.60 L1711.75 116.05 L1716.05 127.60 M1708.56 124.00 H1714.94" stroke="#3c3c3c" stroke-width="1.3" stroke-linejoin="miter" stroke-miterlimit="3" fill="none"/><path d="M1720 116.6 H1728.6 M1720 121.5 H1728.6 M1720 126.3 H1728.6" stroke="#6a6a6a" stroke-width="1.25"/><path d="M1816.8 110.4 L1829.3 115.5 L1816.8 121.3 L1804.6 116 Z" stroke="#3d465c" stroke-width="1.35" stroke-linejoin="round" fill="none"/><path d="M1808.7 118.2 V126.6 Q1808.7 130.7 1817.1 130.7 Q1825.5 130.7 1825.5 126.6 V117.6" stroke="#3d465c" stroke-width="1.35" stroke-linecap="round" fill="none"/><path d="M1828.4 116.4 V124.6" stroke="#3d465c" stroke-width="1.2"/><circle cx="1828.4" cy="126" r="1.25" stroke="#3d465c" stroke-width="1" fill="none"/><path d="M1892.2 106.9 H1920.8" stroke="#b6b6b6" stroke-width="1.6"/><path d="M1897.9 134.4 H1892.7 V107.2 M1920.3 107.2 V134.4 H1914.8" stroke="#adadad" stroke-width="1.15" fill="none"/><rect x="1897.6" y="111.7" width="7.6" height="7.5" rx="0.6" stroke="#d9d9d9" stroke-width="1.15" fill="none"/><rect x="1908.9" y="111.7" width="7.6" height="7.5" rx="0.6" stroke="#d9d9d9" stroke-width="1.15" fill="none"/><path d="M1904.4 126.2 L1911.3 132.6" stroke="#4a86dc" stroke-width="2.9" stroke-linecap="round"/><circle cx="1903.6" cy="125.1" r="4" fill="#4a86dc"/><path d="M1902.7 124.2 L1899.2 120.7" stroke="#fff" stroke-width="2.5" stroke-linecap="round"/></svg>
<svg class="a" style="left:711.8px;top:111.7px;" width="10.700000000000045" height="7.700000000000003" viewBox="0 0 10.700000000000045 7.700000000000003" fill="none"><path d="M2.90 2.90 L5.35 4.80 L7.80 2.90" stroke="#2e2e2e" stroke-width="1.8" stroke-linecap="round" stroke-linejoin="round"/></svg>
<svg class="a" style="left:759.8px;top:111.7px;" width="10.800000000000068" height="7.700000000000003" viewBox="0 0 10.800000000000068 7.700000000000003" fill="none"><path d="M2.90 2.90 L5.40 4.80 L7.90 2.90" stroke="#2e2e2e" stroke-width="1.8" stroke-linecap="round" stroke-linejoin="round"/></svg>
<svg class="a" style="left:879.9px;top:111.7px;" width="10.700000000000045" height="7.700000000000003" viewBox="0 0 10.700000000000045 7.700000000000003" fill="none"><path d="M2.90 2.90 L5.35 4.80 L7.80 2.90" stroke="#2e2e2e" stroke-width="1.8" stroke-linecap="round" stroke-linejoin="round"/></svg>
<svg class="a" style="left:927.2px;top:111.7px;" width="10.799999999999955" height="7.700000000000003" viewBox="0 0 10.799999999999955 7.700000000000003" fill="none"><path d="M2.90 2.90 L5.40 4.80 L7.90 2.90" stroke="#2e2e2e" stroke-width="1.8" stroke-linecap="round" stroke-linejoin="round"/></svg>
<svg class="a" style="left:879.9px;top:145.1px;" width="10.700000000000045" height="7.800000000000011" viewBox="0 0 10.700000000000045 7.800000000000011" fill="none"><path d="M2.90 2.90 L5.35 4.90 L7.80 2.90" stroke="#2e2e2e" stroke-width="1.8" stroke-linecap="round" stroke-linejoin="round"/></svg>
<svg class="a" style="left:946.3px;top:145.1px;" width="10.700000000000045" height="7.800000000000011" viewBox="0 0 10.700000000000045 7.800000000000011" fill="none"><path d="M2.90 2.90 L5.35 4.90 L7.80 2.90" stroke="#2e2e2e" stroke-width="1.8" stroke-linecap="round" stroke-linejoin="round"/></svg>
<svg class="a" style="left:994.2px;top:145.1px;" width="10.799999999999955" height="7.800000000000011" viewBox="0 0 10.799999999999955 7.800000000000011" fill="none"><path d="M2.90 2.90 L5.40 4.90 L7.90 2.90" stroke="#2e2e2e" stroke-width="1.8" stroke-linecap="round" stroke-linejoin="round"/></svg>
<svg class="a" style="left:1548.5px;top:163.6px;" width="10.200000000000045" height="7.5" viewBox="0 0 10.200000000000045 7.5" fill="none"><path d="M2.90 2.90 L5.10 4.60 L7.30 2.90" stroke="#2e2e2e" stroke-width="1.8" stroke-linecap="round" stroke-linejoin="round"/></svg>
<svg class="a" style="left:1623.3px;top:145.2px;" width="10.5" height="7.700000000000017" viewBox="0 0 10.5 7.700000000000017" fill="none"><path d="M2.90 2.90 L5.25 4.80 L7.60 2.90" stroke="#2e2e2e" stroke-width="1.8" stroke-linecap="round" stroke-linejoin="round"/></svg>
<svg class="a" style="left:1758.3px;top:145.1px;" width="10.600000000000136" height="7.800000000000011" viewBox="0 0 10.600000000000136 7.800000000000011" fill="none"><path d="M2.90 2.90 L5.30 4.90 L7.70 2.90" stroke="#2e2e2e" stroke-width="1.8" stroke-linecap="round" stroke-linejoin="round"/></svg>
<svg class="a" style="left:1937.4px;top:145.1px;" width="10.899999999999864" height="7.800000000000011" viewBox="0 0 10.899999999999864 7.800000000000011" fill="none"><path d="M2.90 2.90 L5.45 4.90 L8.00 2.90" stroke="#2e2e2e" stroke-width="1.8" stroke-linecap="round" stroke-linejoin="round"/></svg>
<div class="a" style="left:648.1px;top:295px;width:1px;height:27.8px;background:#c4c4c4;border-radius:0px;"></div>
<div class="a" style="left:621px;top:321.8px;width:28px;height:1px;background:#c4c4c4;border-radius:0px;"></div>
<div class="a" style="left:1312.6px;top:295px;width:1px;height:27.8px;background:#c4c4c4;border-radius:0px;"></div>
<div class="a" style="left:1312.6px;top:321.8px;width:28.4px;height:1px;background:#c4c4c4;border-radius:0px;"></div>
<div class="a" style="left:648.1px;top:322.3px;width:1.6px;height:19.7px;background:#000;border-radius:0px;"></div>
<svg class="a" style="left:649px;top:330px;" width="7" height="9" viewBox="0 0 7 9" fill="none"><path d="M5 1.6 Q5.2 4.6 1.6 5.4 M3.2 3.8 L1.4 5.5 L3.6 6.6" stroke="#9a9a9a" stroke-width="0.9" fill="none"/></svg>
<svg class="a" style="left:600px;top:323px;" width="12" height="18" viewBox="0 0 12 18" fill="none"><circle cx="2.5" cy="2.2" r="1.55" fill="#7b7b7b"/><circle cx="2.5" cy="9" r="1.55" fill="#7b7b7b"/><circle cx="2.5" cy="15.6" r="1.55" fill="#7b7b7b"/><circle cx="8.6" cy="2.2" r="1.55" fill="#7b7b7b"/><circle cx="8.6" cy="9" r="1.55" fill="#7b7b7b"/><circle cx="8.6" cy="15.6" r="1.55" fill="#7b7b7b"/></svg>
<div class="t" style="left:660.40px;top:325.93px;font-size:15.2px;color:#9c9c9c;transform:scaleX(1.0727);">Type &quot;@ai&quot; and press Enter to invoke the WPS AI assistant</div>
<div class="a" style="left:854px;top:269.3px;width:250.6px;height:36.3px;border:1px solid transparent;border-radius:20px;background:linear-gradient(#fff,#fff) padding-box,linear-gradient(160deg,#ff7482 0%,#ee82ae 30%,#d48ad6 68%,#8f6dff 100%) border-box;box-shadow:0 5px 14px rgba(150,120,255,.16),0 1px 3px rgba(150,120,255,.10)"></div>
<svg class="a" style="left:868px;top:278px;" width="22" height="20" viewBox="0 0 22 20" fill="none"><defs><linearGradient id="pg" x1="0" y1="1" x2="1" y2="0"><stop offset="0" stop-color="#e2579f"/><stop offset="1" stop-color="#b765dd"/></linearGradient></defs><path d="M4.4 13.9 L13.2 3.6 Q14.4 2.4 15.7 3.5 Q16.9 4.6 15.9 5.9 L7.2 16.2 L3.4 17 Z" stroke="url(#pg)" stroke-width="1.2" stroke-linejoin="round" fill="none"/><path d="M3.4 17 L4.3 13.9 L7.2 16.2 Z" fill="#e2579f"/><path d="M3.4 17.2 Q11.5 19.6 18.8 14.6" stroke="#a56ff0" stroke-width="1.2" stroke-linecap="round" fill="none"/></svg>
<div class="t" style="left:900.60px;top:282.21px;font-size:14.4px;color:#d45fa8;transform:scaleX(0.9854);background:linear-gradient(90deg,#f4566a 0%,#e55a8e 38%,#c765c8 62%,#9d72f2 100%);-webkit-background-clip:text;background-clip:text;color:transparent;">Start Writing with WPS AI</div>
<svg class="a" style="left:1075px;top:281px;" width="15" height="15" viewBox="0 0 15 15" fill="none"><path d="M2.6 3 L12.4 12.8 M12.4 3 L2.6 12.8" stroke="#6f6f6f" stroke-width="1.3" stroke-linecap="round"/></svg>
<svg class="a" style="left:1960px;top:186px;" width="88" height="1064" viewBox="1960 186 88 1064" fill="none"><path d="M1967.1 194.2 H1973.6 Q1974.2 194.3 1973.8 194.9 L1970.8 198.4 Q1970.35 198.9 1969.9 198.4 L1966.9 194.9 Q1966.5 194.3 1967.1 194.2 Z" fill="#6e6e6e"/><path d="M1965.7 200.3 H1967.5 V202.4 H1968.9 V200.6 H1970.4 V202.4 H1971.5 V200.6 H1973 V202.4 H1973.5 V200.3 H1975.1 V203 Q1975.1 204 1974.1 204 H1966.7 Q1965.7 204 1965.7 203 Z" fill="#6e6e6e"/><path d="M1967 221 H1973.8 L1970.4 215.7 Z" fill="#737373"/><path d="M1967.1 1175.9 H1973.8 L1970.45 1181.3 Z" fill="#7b7b7b"/><path d="M1967.1 1197.6 H1973.8 L1970.45 1193.3 Z M1967.1 1202 H1973.8 L1970.45 1197.9 Z" fill="#7b7b7b"/><rect x="1967.8" y="1214.1" width="5.4" height="5.4" rx="1.2" stroke="#7b7b7b" stroke-width="1.6" fill="none"/><path d="M1967.1 1231.4 H1973.8 L1970.45 1235.5 Z M1967.1 1235.8 H1973.8 L1970.45 1240 Z" fill="#7b7b7b"/><path d="M2006 213 H2022.1" stroke="#7d7d7d" stroke-width="1.4" stroke-linecap="round"/><path d="M2006.6 258.3 L2019.5 244.9 Q2021.4 243.2 2023.2 245 Q2024.9 246.9 2023.3 248.7 L2013.1 258.4 Z M2013.6 251.4 L2016.8 254.6" stroke="#3a3a3a" stroke-width="1.3" stroke-linejoin="round" fill="none"/><path d="M2005 261 H2024" stroke="#7d7d7d" stroke-width="1.7"/><path d="M2005.5 291 L2022.2 295.8 L2017.4 300.4 L2023.6 306.5 L2021.2 308.9 L2014.9 302.9 L2010.2 307.4 Z" stroke="#3a3a3a" stroke-width="1.3" stroke-linejoin="round" fill="none"/><path d="M2006.5 352.2 V341.8 Q2006.5 339.9 2008.4 339.9 H2017.6 M2014 355.7 H2010.6 Q2009 355.7 2009 354.1 V344 Q2009 342.4 2010.6 342.4 H2020.6 Q2022.2 342.4 2022.2 344 V347.5 M2017.3 350.6 L2022.7 356.2 M2022.7 350.6 L2017.3 356.2" stroke="#3d465c" stroke-width="1.5" stroke-linecap="round" fill="none"/><rect x="2006.9" y="395.8" width="15.2" height="9.2" rx="1.2" stroke="#4a4a4a" stroke-width="1.4" fill="none"/><path d="M2009.3 395.6 V392 A5.15 5.15 0 0 1 2019.6 392 V395.6" stroke="#4a4a4a" stroke-width="1.4" fill="none"/><path d="M2009.3 440.3 L2005.5 443.9 L2009.3 447.6 M2019.6 440.3 L2023.6 443.9 L2019.6 447.6 M2017.3 437.7 L2011.4 450.3" stroke="#3a3a3a" stroke-width="1.5" stroke-linecap="round" stroke-linejoin="round" fill="none"/><path d="M2005.4 487.7 H2007.4 M2012.9 487.7 H2023.8 M2005.4 496.3 H2015.8 M2021.4 496.3 H2023.8" stroke="#3a3a3a" stroke-width="1.4" stroke-linecap="round"/><ellipse cx="2010.1" cy="487.7" rx="2.5" ry="3.5" stroke="#3a3a3a" stroke-width="1.3" fill="none"/><ellipse cx="2018.6" cy="496.3" rx="2.5" ry="3.5" stroke="#3a3a3a" stroke-width="1.3" fill="none"/><path d="M2006.3 535 A8.3 8.3 0 1 1 2005.6 539.4" stroke="#3a3a3a" stroke-width="1.4" stroke-linecap="round" fill="none"/><path d="M2005.7 532.8 V537.2 H2009.4" stroke="#3a3a3a" stroke-width="1.4" fill="none"/><path d="M2013.7 533.5 V539 L2017.7 542.6" stroke="#3a3a3a" stroke-width="1.4" stroke-linecap="round" stroke-linejoin="round" fill="none"/><path d="M2005.6 578.6 V594.6 H2008 M2005.6 586.2 H2008" stroke="#3a3a3a" stroke-width="1.3" fill="none"/><rect x="2010.7" y="583.9" width="12.4" height="4.4" rx="0.9" stroke="#3a3a3a" stroke-width="1.4" fill="none"/><rect x="2010.7" y="592.6" width="12.4" height="4.4" rx="0.9" stroke="#3a3a3a" stroke-width="1.4" fill="none"/><circle cx="2014.4" cy="635.9" r="8.7" stroke="#3a3a3a" stroke-width="1.4" fill="none"/><path d="M2011.4 634 Q2011.3 630.9 2014.4 630.8 Q2017.5 630.9 2017.5 633.6 Q2017.5 635.3 2015.6 636.2 Q2014.4 636.9 2014.4 638.9" stroke="#3a3a3a" stroke-width="1.3" stroke-linecap="round" fill="none"/><circle cx="2014.4" cy="641.8" r="0.9" fill="#3a3a3a"/><circle cx="2007.3" cy="683.9" r="1.75" stroke="#3d4254" stroke-width="1.5" fill="none"/><circle cx="2014.4" cy="683.9" r="1.75" stroke="#3d4254" stroke-width="1.5" fill="none"/><circle cx="2021.5" cy="683.9" r="1.75" stroke="#3d4254" stroke-width="1.5" fill="none"/></svg>
<div class="a" style="left:1452.2px;top:1250.3px;width:28.6px;height:29.7px;background:#dbdbdb;border-radius:5px;"></div>
<svg class="a" style="left:0px;top:1251px;" width="2048" height="29" viewBox="0 1251 2048 29" fill="none"><g stroke="#333" stroke-width="1.15" fill="none" stroke-linejoin="round" stroke-linecap="round"><path d="M211.2 1265.8 L213.9 1258.6 L216.6 1265.8 M212.2 1263.4 H215.6"/><path d="M218.4 1258.7 V1265.7 H221 Q222.9 1265.7 222.9 1263.8 Q222.9 1262.1 221 1262 H218.4 M221 1262 Q222.5 1261.9 222.5 1260.3 Q222.5 1258.7 220.8 1258.7 H218.4"/><path d="M230.3 1260 Q229.4 1258.5 227.6 1258.6 Q224.9 1258.8 224.9 1262.2 Q224.9 1265.7 227.6 1265.8 Q229.5 1265.8 230.4 1264.3"/><path d="M216.5 1270.1 L219.4 1272.7 L225.7 1267" stroke-width="1.2"/></g><path d="M307.2 1262.3 L310.2 1265.1 L307.2 1267.9 Z" fill="#5b6a97"/><rect x="1375.4" y="1256.5" width="12.2" height="13.6" rx="1.2" fill="#c9c9c9"/><rect x="1372.9" y="1259.7" width="12" height="13" rx="0.9" fill="#f4f4f4" stroke="#444" stroke-width="1.3"/><path d="M1378.4 1262.6 V1266.6 H1381.2" stroke="#444" stroke-width="1.2" fill="none"/><path d="M1414.9 1261 V1258.2 Q1414.9 1256.9 1416.2 1256.9 H1424.7 Q1426 1256.9 1426 1258.2 V1272 Q1426 1273.3 1424.7 1273.3 H1416.2 Q1414.9 1273.3 1414.9 1272 V1267 M1414.9 1270 H1426" stroke="#4b5670" stroke-width="1.35" fill="none"/><circle cx="1420.5" cy="1271.7" r="0.8" fill="#4b5670"/><path d="M1411 1264 H1419 M1416.2 1261.2 L1419.2 1264 L1416.2 1266.8" stroke="#3a3a3a" stroke-width="1.35" stroke-linecap="round" stroke-linejoin="round" fill="none"/><rect x="1459.9" y="1256.95" width="13.2" height="14.05" rx="1.2" stroke="#3a3a3a" stroke-width="1.45" fill="none"/><path d="M1462.9 1261.7 H1470 M1462.9 1265.5 H1467.6" stroke="#444" stroke-width="1.25" stroke-linecap="round"/><path d="M1501.6 1258.4 H1511.8 M1504.2 1262.3 H1511.8 M1501.6 1266.2 H1511.8 M1504.2 1270.1 H1510.2" stroke="#555" stroke-width="1.25" stroke-linecap="round"/><path d="M1496.6 1258.4 H1498.2 M1496.6 1266.2 H1498.2" stroke="#555" stroke-width="1.3" stroke-linecap="round"/><path d="M1538.9 1257.8 L1550.2 1264.3 L1538.9 1270.8 Z" stroke="#333" stroke-width="1.4" stroke-linejoin="round" fill="none"/><g stroke="#333" stroke-width="1.3" fill="none"><circle cx="1582.2" cy="1264.1" r="7.2"/><ellipse cx="1582.2" cy="1264.1" rx="3.1" ry="7.2"/><path d="M1575 1264.1 H1589.4 M1582.2 1256.9 V1271.3"/></g><path d="M1614.4 1264.2 Q1618 1258.4 1622.5 1258.4 Q1627 1258.4 1630.6 1264.2 Q1627 1270 1622.5 1270 Q1618 1270 1614.4 1264.2 Z" stroke="#333" stroke-width="1.35" stroke-linejoin="round" fill="none"/><circle cx="1622.5" cy="1264.2" r="2.1" stroke="#333" stroke-width="1.25" fill="none"/><path d="M1680.7 1260.4 V1258.6 Q1680.7 1257 1682.3 1257 H1684.1 M1691.9 1257 H1693.6 Q1695.2 1257 1695.2 1258.6 V1260.4 M1695.2 1267.5 V1269.3 Q1695.2 1270.9 1693.6 1270.9 H1691.9 M1684.1 1270.9 H1682.3 Q1680.7 1270.9 1680.7 1269.3 V1267.5" stroke="#333" stroke-width="1.4" stroke-linecap="round" fill="none"/><rect x="1685.3" y="1261.2" width="5.8" height="5.9" rx="0.5" stroke="#333" stroke-width="1.4" fill="none"/><path d="M1799.8 1264.6 H1811.8" stroke="#2e2e2e" stroke-width="2.3" stroke-linecap="round"/><path d="M1830 1264.6 H1890" stroke="#2f66d6" stroke-width="1.6"/><path d="M1893 1264.6 H1956.6" stroke="#c2c2c2" stroke-width="1.1"/><circle cx="1893.6" cy="1264.4" r="7" fill="#fff" stroke="#e2e2e2" stroke-width="0.8"/><circle cx="1893.6" cy="1264.3" r="3" fill="#8c8c8c"/><path d="M1976 1264.7 H1985.8 M1980.9 1259.8 V1269.6" stroke="#2e2e2e" stroke-width="2.1" stroke-linecap="round"/><path d="M2012.6 1260 V1258.4 Q2012.6 1256.9 2014.1 1256.9 H2015.8 M2027.2 1268 V1269.7 Q2027.2 1271.2 2025.7 1271.2 H2024 M2021.4 1262.4 L2026.6 1257.4 M2022.6 1257 H2027 V1261.4 M2018.2 1266 L2013 1271 M2012.7 1266.8 V1271.2 H2017.1" stroke="#333" stroke-width="1.4" stroke-linecap="round" stroke-linejoin="round" fill="none"/></svg>
<svg class="a" style="left:1635.9px;top:1261.1px;" width="10.699999999999818" height="7.800000000000182" viewBox="0 0 10.699999999999818 7.800000000000182" fill="none"><path d="M2.85 2.85 L5.35 4.95 L7.85 2.85" stroke="#2e2e2e" stroke-width="1.7" stroke-linecap="round" stroke-linejoin="round"/></svg>
<svg class="a" style="left:1767.9px;top:1261.1px;" width="10.5" height="7.800000000000182" viewBox="0 0 10.5 7.800000000000182" fill="none"><path d="M2.85 2.85 L5.25 4.95 L7.65 2.85" stroke="#2e2e2e" stroke-width="1.7" stroke-linecap="round" stroke-linejoin="round"/></svg>
<div class="a" style="left:1441.3px;top:1256.7px;width:1px;height:16.4px;background:#e2e2e2;border-radius:0px;"></div>
<div class="a" style="left:1662.4px;top:1256.7px;width:1px;height:16.4px;background:#e2e2e2;border-radius:0px;"></div>
<div class="a" style="left:0px;top:1278.8px;width:2048px;height:1.2px;background:linear-gradient(90deg,#6c6c6c 0%,#6c6c6c 49%,#474b55 52%,#3a3f52 60%,#2f4166 76%,#2c4a86 100%);border-radius:0px;"></div>
</body></html>
